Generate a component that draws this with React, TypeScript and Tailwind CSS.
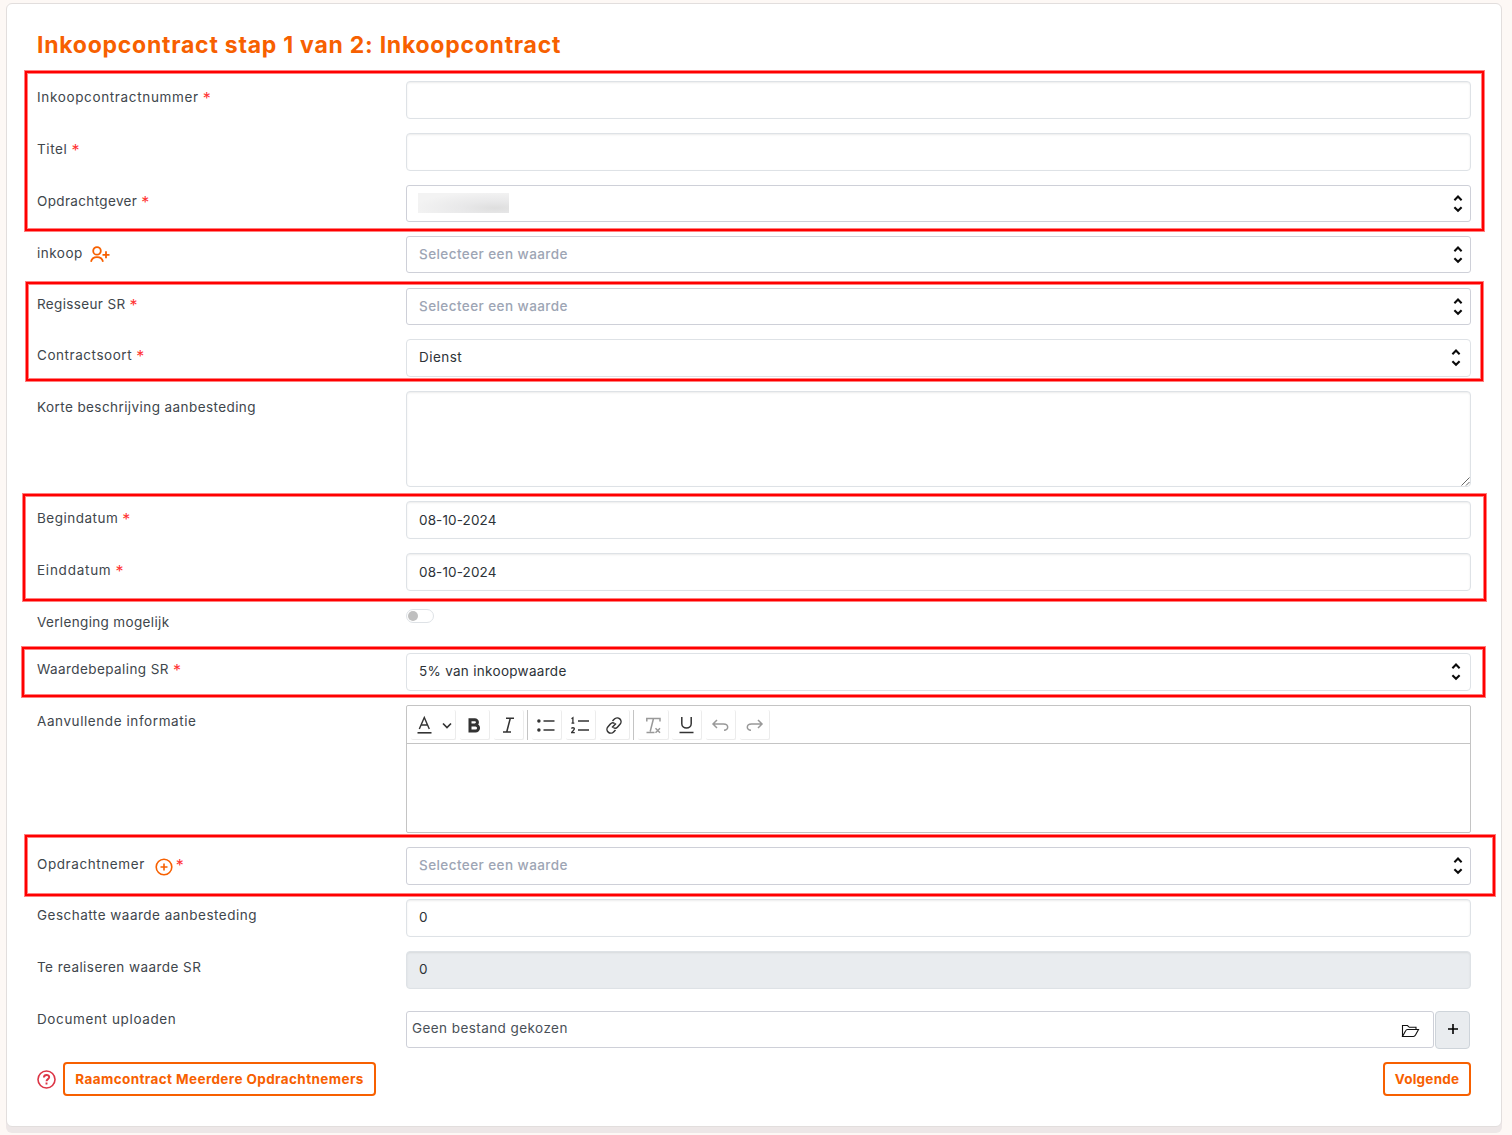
import React from "react";

type Row = {
  label: string;
  tracking: string;
  required?: boolean;
  height: string;
  icon?: "user" | "plus";
  field: React.ReactNode;
  labelPad?: string;
};

function Chevrons({ right }: { right: string }) {
  return (
    <svg className={`ml-auto shrink-0 ${right}`} width="10" height="20" viewBox="0 0 10 20" fill="none" stroke="#0b0b0b" strokeWidth="2.1">
      <path d="M1.4 6.200 5 2.600l3.600 3.600M1.400 13.200 5 16.800l3.600-3.600" />
    </svg>
  );
}

function Input({ value, tracking = "", pad = "pb-px", gray }: { value?: string; tracking?: string; pad?: string; gray?: boolean }) {
  return (
    <div className={`flex h-[38px] items-center rounded border border-[#dee2e6] px-3 text-[#2d3237] shadow-[inset_0_1px_2px_rgba(0,0,0,0.075)] ${pad} ${gray ? "bg-[#e9ecef]" : "bg-white"}`}>
      <span className={tracking}>{value}</span>
    </div>
  );
}

function Combo({ blurred, height = "h-[37px]" }: { blurred?: boolean; height?: string }) {
  return (
    <div className={`flex items-center rounded-[3px] border border-[#ced0d8] bg-white text-[#9da5b4] ${height}`}>
      {blurred ? (
        <span className="mb-0.5 ml-[11px] h-5 w-[91px] bg-[radial-gradient(ellipse_at_85%_75%,#dedede_0%,#e8e8e9_30%,#f3f3f3_75%)]" />
      ) : (
        <span className="ml-3 pb-0.5 font-medium tracking-[0.43px]">Selecteer een waarde</span>
      )}
      <Chevrons right="mr-[7px]" />
    </div>
  );
}

function Select({ value, tracking }: { value: string; tracking: string }) {
  return (
    <div className="flex h-[38px] items-center rounded border border-[#dee2e6] bg-white text-[#2d3237]">
      <span className={`ml-3 pb-[3px] ${tracking}`}>{value}</span>
      <Chevrons right="mr-[9px]" />
    </div>
  );
}

function ToolButton({ width, children }: { width: string; children: React.ReactNode }) {
  return (
    <span className={`flex h-[30px] items-center justify-center rounded-[2px] border-r border-b border-[#ececec] ${width}`}>
      {children}
    </span>
  );
}

function ToolIcon({ children, muted, viewBox = "0 0 20 20" }: { children: React.ReactNode; muted?: boolean; viewBox?: string }) {
  return (
    <svg width="20" height="20" viewBox={viewBox} fill="none" stroke={muted ? "#999" : "#333"} strokeWidth="1.5">
      {children}
    </svg>
  );
}

function Editor() {
  return (
    <div className="h-32 rounded-[2px] border border-[#c4c4c4] bg-white">
      <div className="flex h-[38px] items-center border-b border-[#c4c4c4] pl-1 pt-px">
        <ToolButton width="w-[45px]">
          <svg width="38" height="20" viewBox="0 0 38 20" fill="none" stroke="#333" strokeWidth="1.4">
            <path d="m5.300 14 5-11.500 5 11.500M7.100 10h6.400" />
            <path d="M3.500 17.800h14" strokeWidth="1.600" />
            <path d="m29 8.500 4 4 4-4" strokeWidth="1.700" />
          </svg>
        </ToolButton>
        <span className="w-1" />
        <ToolButton width="w-[30px]">
          <ToolIcon viewBox="1 -0.5 20 20"><path d="M6 4.200h4.800a2.600 2.600 0 0 1 0 5.300H6Zm0 5.300h5.500a3.050 3.050 0 0 1 0 6.100H6Z" strokeWidth="3" /></ToolIcon>
        </ToolButton>
        <span className="w-1" />
        <ToolButton width="w-[30px]">
          <ToolIcon viewBox="1 -0.5 20 20"><path d="M8 2.800h8M5 16.500h8M12.300 2.800 8.700 16.500" /></ToolIcon>
        </ToolButton>
        <span className="ml-[3px] mr-1 h-[30px] w-px bg-[#c4c4c4]" />
        <ToolButton width="w-[30px]">
          <ToolIcon viewBox="1.500 -0.500 20 20"><path d="M8 5.500h11M8 14.500h11" strokeWidth="1.600" /><circle cx="3.400" cy="5.500" r="1" fill="#333" /><circle cx="3.400" cy="14.500" r="1" fill="#333" /></ToolIcon>
        </ToolButton>
        <span className="w-1" />
        <ToolButton width="w-[30px]">
          <ToolIcon viewBox="1.500 -0.500 20 20"><path d="M8.500 5.500h11M8.500 14.500h11" strokeWidth="1.600" /><path d="M2 3.200 3.400 2.300v5.400M2 7.700h2.800M1.900 13.200c.3-1.300 3-1.300 3 .1 0 1.200-1.500 1.800-2.900 3.800h3.300" strokeWidth="1.300" /></ToolIcon>
        </ToolButton>
        <span className="w-1" />
        <ToolButton width="w-[30px]">
          <ToolIcon viewBox="1 -0.500 20 20"><path d="m8.500 5.500 1.900-1.900a3.800 3.800 0 0 1 5.600 5.200l-2.400 2.700c-1.200 1.300-3 1.400-4.200.5M11.500 14.500l-1.900 1.900A3.800 3.800 0 0 1 4 11.200l2.400-2.700c1.200-1.300 3-1.400 4.200-.5M8 12l4-4" /></ToolIcon>
        </ToolButton>
        <span className="ml-[3px] mr-1 h-[30px] w-px bg-[#c4c4c4]" />
        <ToolButton width="w-[31px]">
          <ToolIcon muted viewBox="0 -0.500 20 20"><path d="M3.800 6V3H17v3M10.500 3 7.200 16M3.500 17h8" /><path d="m12.500 12.800 4.500 4.500m0-4.500-4.500 4.500" /></ToolIcon>
        </ToolButton>
        <span className="w-[3px]" />
        <ToolButton width="w-[30px]">
          <ToolIcon viewBox="0.500 0 20 20"><path d="M5.300 2v6.800c0 5.500 9.400 5.500 9.400 0V2M3 17.500h14" /></ToolIcon>
        </ToolButton>
        <span className="w-1" />
        <ToolButton width="w-[30px]">
          <ToolIcon muted viewBox="1 -0.500 20 20"><path d="M7 4.500 3 8.500l4 4M3 8.500h10.500c5.500 0 5.500 6.200.5 6.200" /></ToolIcon>
        </ToolButton>
        <span className="w-1" />
        <ToolButton width="w-[30px]">
          <ToolIcon muted viewBox="1 -0.500 20 20"><path d="m14 4.500 4 4-4 4M18 8.500H7.500c-5.500 0-5.500 6.200-.5 6.200" /></ToolIcon>
        </ToolButton>
      </div>
    </div>
  );
}

function Upload() {
  return (
    <div className="flex pt-2">
      <div className="flex h-[37px] w-[1028px] items-center rounded-[3px] border border-[#ced0d8] pl-[5px] pr-[13px] text-[#495057]">
        <span className="pb-[3px] tracking-[0.43px]">Geen bestand gekozen</span>
        <svg className="ml-auto mt-0.5" width="19" height="14" viewBox="0 0 19 14" fill="none" stroke="#111" strokeWidth="1.1">
          <path d="M1.500 12.500V1.500h5l1.800 1.800H15v2.200M1.500 12.500l3-5.500c.5-1 1-1.500 2-1.500h11l-3 5.600c-.5.9-1 1.400-2 1.400Z" />
        </svg>
      </div>
      <div className="ml-px flex h-[38px] w-[35px] items-center justify-center rounded border border-[#ced4da] bg-[#e9ecef]">
        <svg className="mb-0.5" width="10" height="10" viewBox="0 0 10 10" stroke="#000" strokeWidth="1.600"><path d="M5 0v10M0 5h10" /></svg>
      </div>
    </div>
  );
}

const rows: Row[] = [
  { label: "Inkoopcontractnummer", tracking: "tracking-[0.65px]", required: true, height: "h-[52px]", field: <Input /> },
  { label: "Titel", tracking: "tracking-[0.6px]", required: true, height: "h-[52px]", field: <Input /> },
  { label: "Opdrachtgever", tracking: "tracking-[0.35px]", required: true, height: "h-[51px]", field: <Combo blurred /> },
  { label: "inkoop", tracking: "tracking-[0.5px]", height: "h-[52px]", icon: "user", labelPad: "pt-[7px]", field: <Combo /> },
  { label: "Regisseur SR", tracking: "tracking-[0.35px]", required: true, height: "h-[51px]", field: <Combo /> },
  { label: "Contractsoort", tracking: "tracking-[0.55px]", required: true, height: "h-[52px]", field: <Select value="Dienst" tracking="tracking-[0.45px]" /> },
  {
    label: "Korte beschrijving aanbesteding", tracking: "tracking-[0.42px]", height: "h-[110px]",
    field: (
      <div className="flex h-24 items-end justify-end rounded border border-[#dee2e6] shadow-[inset_0_1px_2px_rgba(0,0,0,0.075)]">
        <svg width="9" height="9" viewBox="0 0 9 9" stroke="#555" strokeWidth="0.9"><path d="M0.5 8.500l8-8M5 8.500 8.500 5" /></svg>
      </div>
    ),
  },
  { label: "Begindatum", tracking: "tracking-[0.5px]", required: true, height: "h-[52px]", labelPad: "pt-[7px]", field: <Input value="08-10-2024" tracking="tracking-[0.12px]" /> },
  { label: "Einddatum", tracking: "tracking-[0.75px]", required: true, height: "h-[52px]", labelPad: "pt-[7px]", field: <Input value="08-10-2024" tracking="tracking-[0.12px]" /> },
  {
    label: "Verlenging mogelijk", tracking: "tracking-[0.35px]", height: "h-12", labelPad: "pt-[7px]",
    field: <div className="mt-1 flex h-[14px] w-7 items-center rounded-full border border-[#dee2e6] pl-px"><span className="size-[10px] rounded-full bg-[#bfbfbf]" /></div>,
  },
  { label: "Waardebepaling SR", tracking: "tracking-[0.42px]", required: true, height: "h-[52px]", field: <Select value="5% van inkoopwaarde" tracking="tracking-[0.3px]" /> },
  { label: "Aanvullende informatie", tracking: "tracking-[0.58px]", height: "h-[142px]", field: <Editor /> },
  { label: "Opdrachtnemer", tracking: "tracking-[0.58px]", required: true, height: "h-[52px]", icon: "plus", labelPad: "pt-[7px]", field: <Combo height="h-[38px]" /> },
  { label: "Geschatte waarde aanbesteding", tracking: "tracking-[0.49px]", height: "h-[52px]", field: <Input value="0" pad="pb-[3px]" /> },
  { label: "Te realiseren waarde SR", tracking: "tracking-[0.44px]", height: "h-[52px]", field: <Input value="0" pad="pb-[3px]" gray /> },
  { label: "Document uploaden", tracking: "tracking-[0.62px]", height: "h-[59px]", field: <Upload /> },
];

function LabelIcon({ kind }: { kind: "user" | "plus" }) {
  if (kind === "user") {
    return (
      <svg className="ml-[7px] mt-[3px]" width="20" height="16" viewBox="0 0 20 16" fill="none" stroke="#f76000" strokeWidth="1.800">
        <circle cx="7" cy="4.900" r="3.800" />
        <path d="M1 15.800c.7-3.300 2.900-4.600 6-4.600s5.300 1.300 6 4.600M12.500 8.800h7M16 5.300v7" />
      </svg>
    );
  }
  return (
    <svg className="-mr-px ml-2.5 mt-1" width="18" height="18" viewBox="0 0 18 18" fill="none" stroke="#f76000" strokeWidth="1.600">
      <circle cx="9" cy="9" r="7.800" />
      <path d="M5.500 9h7M9 5.500v7" />
    </svg>
  );
}

const highlights = [
  "left-[24px] top-[70px] h-[162px] w-[1461px]",
  "left-[25px] top-[281px] h-[101px] w-[1459px]",
  "left-[22px] top-[493px] h-[109px] w-[1465px]",
  "left-[21px] top-[646px] h-[52px] w-[1465px]",
  "left-[24px] top-[834px] h-[63px] w-[1472px]",
];

export default function App() {
  return (
    <div className="relative h-[1135px] w-[1512px] overflow-hidden bg-[#fdf8f5] pl-1.5 pt-[3px] font-['Inter',sans-serif] text-[13.500px] leading-5 text-[#40464c]">
      <main className="h-[1124px] w-[1496px] rounded-md border border-[#e2dedd] bg-white pl-[30px] pr-[30px] pt-[27px] shadow-[0_6px_0_#ede7e7]">
        <h1 className="h-[50px] whitespace-nowrap text-[23px] font-bold leading-[28px] tracking-[0.750px] text-[#f76000]">
          Inkoopcontract stap 1 van 2: Inkoopcontract
        </h1>
        {rows.map((r) => (
          <div key={r.label} className={`flex ${r.height}`}>
            <div className={`flex w-[369px] shrink-0 items-start whitespace-nowrap ${r.labelPad ?? "pt-1.5"}`}>
              <span className={r.tracking}>{r.label}</span>
              {r.icon && <LabelIcon kind={r.icon} />}
              {r.required && <span className="ml-1 pt-px text-base leading-5 text-[#f33]">*</span>}
            </div>
            <div className="w-[1065px] shrink-0">{r.field}</div>
          </div>
        ))}
        <div className="flex h-[34px] items-center">
          <svg width="19" height="19" viewBox="0 0 19 19" fill="none" stroke="#dc3545" strokeWidth="1.600">
            <circle cx="9.500" cy="9.500" r="8.500" />
            <path d="M6.900 7.500c.1-3.400 5.400-3.200 5.300-.200 0 1.800-2.700 1.900-2.700 4M9.500 12.600v1.900" strokeWidth="1.900" />
          </svg>
          <button className="ml-[7px] h-[34px] w-[313px] whitespace-nowrap rounded border-2 border-[#f76000] font-bold tracking-[0.400px] text-[#f76000]">
            Raamcontract Meerdere Opdrachtnemers
          </button>
          <button className="ml-auto h-[34px] w-[88px] rounded border-2 border-[#f76000] font-bold tracking-[0.250px] text-[#f76000]">Volgende</button>
        </div>
      </main>
      {highlights.map((h) => (
        <div key={h} className={`pointer-events-none absolute border border-[#ff0000]/50 ${h}`}>
          <div className="h-full w-full border-2 border-[#ff0000] shadow-[inset_0_0_0_1px_rgba(255,0,0,0.5)]" />
        </div>
      ))}
    </div>
  );
}
